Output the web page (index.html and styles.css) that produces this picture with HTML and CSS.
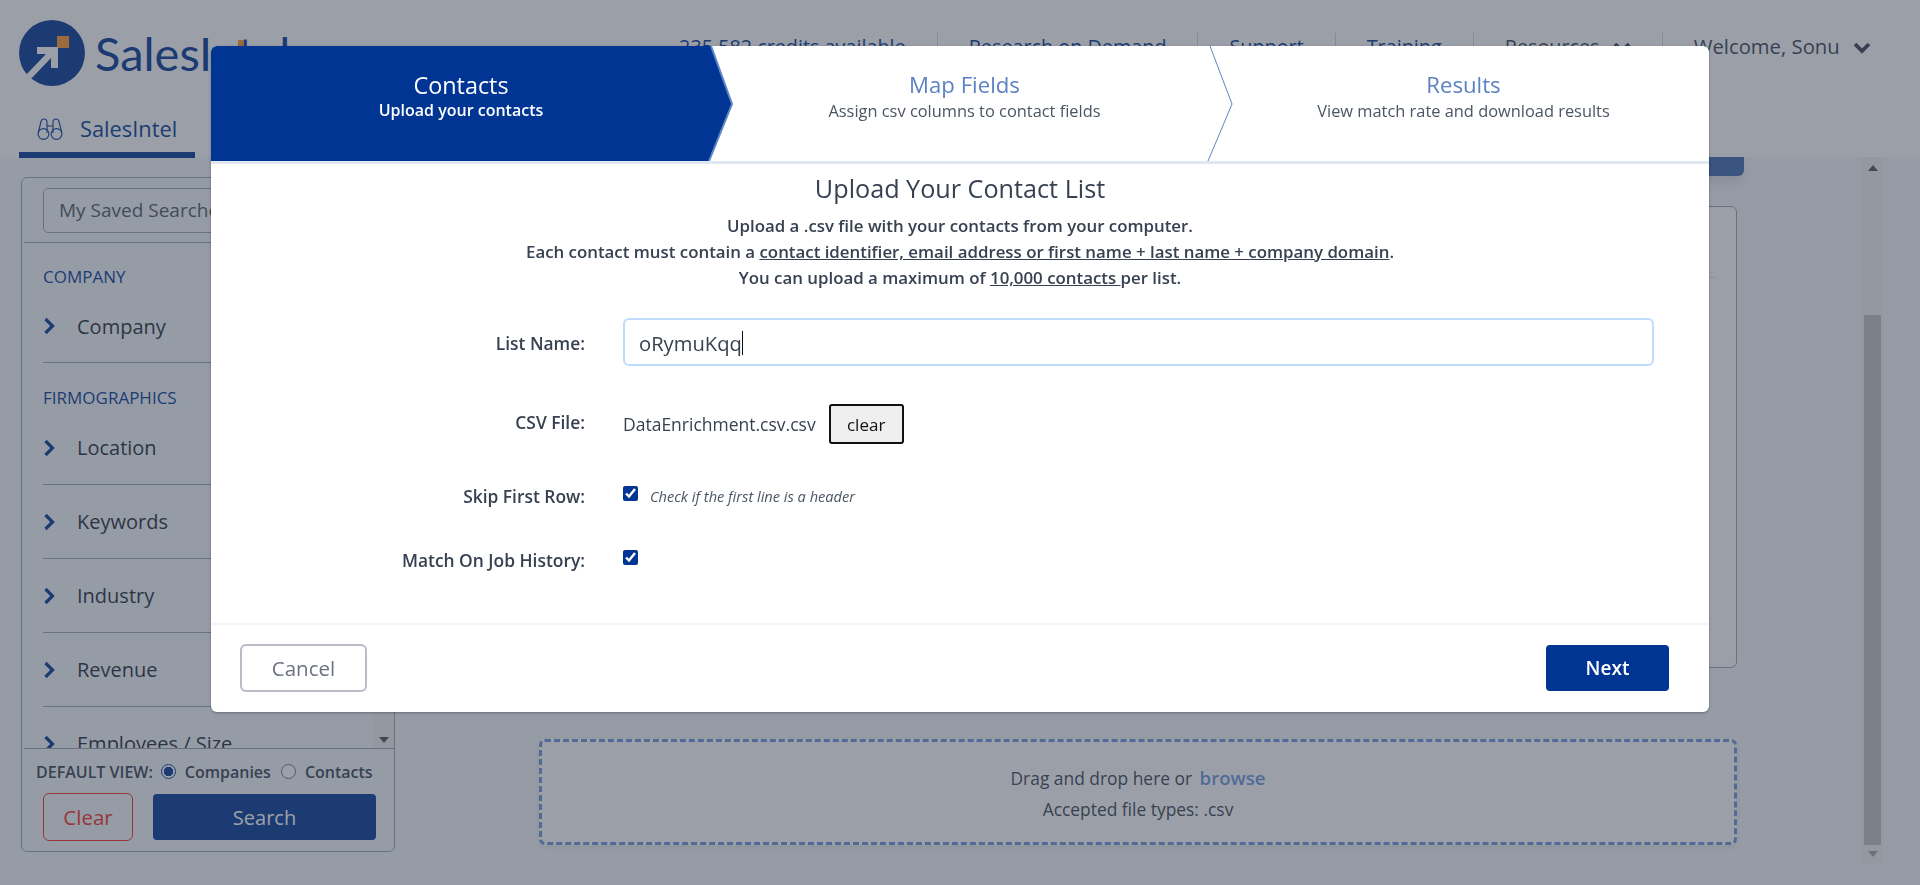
FILE: index.html
```html
<!DOCTYPE html>
<html lang="en">
<head>
<meta charset="utf-8">
<title>SalesIntel - Data Enrichment</title>
<link rel="stylesheet" href="styles.css">
</head>
<body>
<div class="page">
  <header class="app-header">
    <div class="top-row">
      <a class="logo">
        <svg class="logo-mark" viewBox="0 0 66 66" width="66" height="66">
          <circle cx="33" cy="33" r="33" fill="#003594"/>
          <rect x="38" y="16" width="12" height="12" fill="#ff9329"/>
          <polygon points="18,27 39,27 39,48 32,48 32,38 9,62 5,57 27,34 18,34" fill="#fff"/>
        </svg>
        <span class="logo-text">SalesIntel<i class="logo-dot"></i></span>
      </a>
      <nav class="top-nav">
        <a class="nav-item link">235,582 credits available</a>
        <a class="nav-item link">Research on Demand</a>
        <a class="nav-item link">Support</a>
        <a class="nav-item link">Training</a>
        <a class="nav-item muted">Resources
          <svg class="chev" viewBox="0 0 18 12" width="18" height="12"><path d="M2 2l7 7 7-7" fill="none" stroke="currentColor" stroke-width="3.8"/></svg>
        </a>
        <a class="nav-item muted welcome">Welcome, Sonu
          <svg class="chev" viewBox="0 0 18 12" width="18" height="12"><path d="M2 2l7 7 7-7" fill="none" stroke="currentColor" stroke-width="3.8"/></svg>
        </a>
      </nav>
    </div>
    <div class="tab">
      <svg class="binoculars" viewBox="0 0 26 22" width="26" height="22" fill="none" stroke="#003594" stroke-width="1.1">
        <circle cx="6.5" cy="16" r="5.4"/><circle cx="19.5" cy="16" r="5.4"/>
        <path d="M1.2 15L4 3.5Q4.6 1 7 1 9.5 1 10 3.5V15M16 15V3.5Q16.5 1 19 1 21.4 1 22 3.5L24.8 15M10 8h6"/>
      </svg>
      <span>SalesIntel</span>
    </div>
  </header>

  <main class="workspace">
    <aside class="sidebar">
      <div class="filters">
        <div class="saved"><div class="saved-select">My Saved Searches</div></div>
        <h4 class="section-label">Company</h4>
        <div class="filter first"><svg class="arrow" viewBox="0 0 12 18" width="12" height="18"><path d="M2.5 2l7 7-7 7" fill="none" stroke="#003594" stroke-width="3.2"/></svg>Company</div>
        <h4 class="section-label second">Firmographics</h4>
        <div class="filter after-label"><svg class="arrow" viewBox="0 0 12 18" width="12" height="18"><path d="M2.5 2l7 7-7 7" fill="none" stroke="#003594" stroke-width="3.2"/></svg>Location</div>
        <div class="filter"><svg class="arrow" viewBox="0 0 12 18" width="12" height="18"><path d="M2.5 2l7 7-7 7" fill="none" stroke="#003594" stroke-width="3.2"/></svg>Keywords</div>
        <div class="filter"><svg class="arrow" viewBox="0 0 12 18" width="12" height="18"><path d="M2.5 2l7 7-7 7" fill="none" stroke="#003594" stroke-width="3.2"/></svg>Industry</div>
        <div class="filter"><svg class="arrow" viewBox="0 0 12 18" width="12" height="18"><path d="M2.5 2l7 7-7 7" fill="none" stroke="#003594" stroke-width="3.2"/></svg>Revenue</div>
        <div class="filter"><svg class="arrow" viewBox="0 0 12 18" width="12" height="18"><path d="M2.5 2l7 7-7 7" fill="none" stroke="#003594" stroke-width="3.2"/></svg>Employees / Size</div>
        <div class="side-scroll"><span class="tri down"></span></div>
      </div>
      <div class="side-footer">
        <div class="view-row">
          <b>DEFAULT VIEW:</b>
          <span class="radio on"></span><span class="radio-label">Companies</span>
          <span class="radio"></span><span class="radio-label">Contacts</span>
        </div>
        <div class="actions">
          <button class="btn-clear">Clear</button>
          <button class="btn-search">Search</button>
        </div>
      </div>
    </aside>

    <section class="content">
      <div class="top-bar"></div>
      <div class="list-card"><div class="card-line"></div></div>
      <h2 class="content-title">Data Enrichment</h2>
      <div class="dropzone">
        <p>Drag and drop here or <a>browse</a></p>
        <p>Accepted file types: .csv</p>
      </div>
    </section>

    <div class="page-scroll">
      <span class="tri up"></span>
      <div class="thumb"></div>
      <span class="tri down faint"></span>
    </div>
  </main>
</div>

<div class="backdrop"></div>

<div class="modal">
  <div class="steps">
    <svg class="step-shapes" viewBox="0 0 1498 115" width="1498" height="115" preserveAspectRatio="none">
      <polygon points="0,0 500,0 521,58 498,115 0,115" fill="#003594"/>
      <path d="M500 0L521 58 498 115" fill="none" stroke="#5f86c4" stroke-width="2"/>
      <path d="M999 0L1021 58 997 115" fill="none" stroke="#5f86c4" stroke-width="1"/>
    </svg>
    <div class="step active"><strong>Contacts</strong><span>Upload your contacts</span></div>
    <div class="step"><strong>Map Fields</strong><span>Assign csv columns to contact fields</span></div>
    <div class="step"><strong>Results</strong><span>View match rate and download results</span></div>
  </div>
  <div class="modal-body">
    <h3>Upload Your Contact List</h3>
    <p class="intro">Upload a .csv file with your contacts from your computer.<br>
    Each contact must contain a <u>contact identifier, email address or first name + last name + company domain</u>.<br>
    You can upload a maximum of <u>10,000 contacts </u>per list.</p>
    <div class="form">
      <div class="form-row name-row">
        <label>List Name:</label>
        <div class="text-input">oRymuKqq<span class="caret"></span></div>
      </div>
      <div class="form-row file-row">
        <label>CSV File:</label>
        <span class="file-name">DataEnrichment.csv.csv</span>
        <button class="btn-file-clear">clear</button>
      </div>
      <div class="form-row skip-row">
        <label>Skip First Row:</label>
        <input type="checkbox" checked>
        <em>Check if the first line is a header</em>
      </div>
      <div class="form-row match-row">
        <label>Match On Job History:</label>
        <input type="checkbox" checked>
      </div>
    </div>
  </div>
  <div class="modal-footer">
    <button class="btn-cancel">Cancel</button>
    <button class="btn-next">Next</button>
  </div>
</div>
</body>
</html>
```
FILE: styles.css
```css
* { box-sizing: border-box; }
html, body { margin: 0; height: 100%; overflow: hidden; }
body {
  font-family: "Open Sans", "Noto Sans", sans-serif;
  background: #f5f7fb;
  color: #374151;
}
h2, h3, h4, p { margin: 0; font-weight: 400; }
button { font-family: inherit; cursor: pointer; }

.page { width: 1920px; height: 885px; display: flex; flex-direction: column; }

/* header */
.app-header {
  height: 157px;
  flex: none;
  background: #fff;
  padding: 20px 0 0 19px;
  position: relative;
}
.top-row { display: flex; justify-content: space-between; height: 79px; }
.logo { display: flex; align-items: center; height: 66px; color: #003594; }
.logo-mark { flex: none; }
.logo-text {
  font-family: Lato, sans-serif;
  font-size: 47px;
  margin-left: 10px;
  color: #003594;
  position: relative;
  line-height: 66px;
}
.logo-dot {
  position: absolute;
  left: 143px;
  top: 20px;
  width: 6px;
  height: 6px;
  background: #ff9329;
}
.top-nav { display: flex; align-items: flex-start; padding: 13px 49px 0 0; }
.nav-item {
  height: 30px;
  padding: 0 31px;
  font-size: 19.8px;
  line-height: 27px;
  border-left: 1px solid #d1d5db;
  white-space: nowrap;
}
.nav-item:first-child { border-left: 0; }
.nav-item.link { color: #003594; }
.nav-item.muted { color: #374151; }
.welcome { padding-right: 0; font-size: 20.3px; }
.chev { margin-left: 8px; }
.tab {
  width: 176px;
  height: 59px;
  border-bottom: 6px solid #003594;
  display: flex;
  align-items: center;
  gap: 17px;
  padding: 6px 0 0 18px;
  font-size: 21.8px;
  color: #003594;
}

/* body area */
.workspace { flex: 1; display: flex; align-items: flex-start; min-height: 0; }
.sidebar {
  width: 374px;
  height: 675px;
  margin: 20px 0 0 21px;
  border: 1px solid #9ca3af;
  border-radius: 6px;
  display: flex;
  flex-direction: column;
  flex: none;
  background: #f5f7fb;
}
.filters { height: 570px; position: relative; overflow: hidden; flex: none; }
.saved { margin: 0 0 0 2px; padding: 10px 0 9px 19px; border-bottom: 1px solid #9ca3af; height: 65px; }
.saved-select {
  width: 300px;
  height: 45px;
  border: 1px solid #9ca3af;
  border-radius: 5px;
  padding-left: 15px;
  line-height: 43px;
  font-size: 19px;
  color: #4b5563;
  white-space: nowrap;
}
.section-label {
  margin: 24px 0 0 21px;
  line-height: 20px;
  font-size: 17px;
  color: #003594;
  text-transform: uppercase;
}
.section-label.second { margin-top: 25px; }
.filter {
  margin-left: 21px;
  width: 330px;
  height: 74px;
  display: flex;
  align-items: center;
  gap: 22px;
  font-size: 20px;
  color: #1f2937;
  border-bottom: 1px solid #9ca3af;
  white-space: nowrap;
}
.filter.first { height: 73px; margin-top: 3px; }
.filter.after-label { margin-top: 3px; }
.filter:last-of-type { border-bottom: 0; }
.arrow { flex: none; }
.side-scroll {
  position: absolute;
  right: 0;
  top: 0;
  bottom: 0;
  width: 21px;
  background: #f1f1f1;
  display: flex;
  justify-content: center;
  align-items: flex-end;
  padding-bottom: 5px;
}
.tri { width: 0; height: 0; border-left: 5px solid transparent; border-right: 5px solid transparent; display: block; }
.tri.down { border-top: 6px solid #505050; }
.tri.up { border-bottom: 6px solid #505050; }
.tri.down.faint { border-top-color: #a3a3a3; }

.side-footer { flex: 1; border-top: 1px solid #9ca3af; margin-left: 2px; }
.view-row { display: flex; align-items: center; height: 44px; padding: 1px 0 0 12px; font-size: 16px; white-space: nowrap; }
.view-row b { font-weight: 600; margin-right: 8px; }
.radio { width: 15px; height: 15px; border: 1px solid #6b7280; border-radius: 50%; background: #fff; flex: none; margin-right: 9px; }
.radio.on { border-color: #003594; background: radial-gradient(circle, #003594 0 4.5px, #fff 5px); }
.radio-label { margin-right: 10px; font-weight: 600; color: #374151; }
.actions { display: flex; gap: 20px; padding-left: 19px; }
.btn-clear {
  width: 90px;
  height: 48px;
  border: 1px solid #f52a20;
  border-radius: 6px;
  background: transparent;
  color: #f52a20;
  font-size: 20.5px;
}
.btn-search {
  width: 223px;
  height: 46px;
  margin-top: 1px;
  border: 0;
  border-radius: 4px;
  background: #003594;
  color: #fff;
  font-size: 20px;
}

.content { width: 1198px; margin-left: 144px; flex: none; }
.top-bar {
  width: 1205px;
  height: 19px;
  background: #3b66ad;
  border-radius: 0 0 6px 6px;
  box-shadow: 0 6px 14px rgba(0,0,0,.12);
}
.list-card {
  height: 462px;
  margin-top: 30px;
  border: 1px solid #9ca3af;
  border-radius: 6px;
  background: #fff;
  padding: 70px 20px 0;
}
.card-line { border-top: 1px solid #e5e7eb; }
.content-title { font-size: 26px; line-height: 32px; margin-top: 15px; color: #d1d5db; height: 40px; }
.dropzone {
  height: 106px;
  margin-top: 16px;
  border: 3px dashed #6d93db;
  border-radius: 6px;
  text-align: center;
  padding-top: 20px;
  font-size: 17.4px;
  line-height: 31px;
  box-shadow: 0 2px 6px rgba(0,0,0,.08);
  background: #fff;
}
.dropzone a { color: #6d93db; font-weight: 600; margin-left: 3px; font-size: 18.6px; }

.page-scroll {
  width: 21px;
  height: 708px;
  margin-left: 125px;
  flex: none;
  background: #f1f1f1;
  display: flex;
  flex-direction: column;
  align-items: center;
  padding-top: 8px;
}
.thumb { width: 17px; height: 530px; margin-top: 144px; background: #c1c1c1; }
.page-scroll .tri.down { margin-top: 6px; }

/* overlay */
.backdrop { position: fixed; inset: 0; background: rgba(55,65,81,.5); }
.modal {
  position: fixed;
  left: 211px;
  top: 46px;
  width: 1498px;
  height: 666px;
  background: #fff;
  border-radius: 6px;
  overflow: hidden;
  box-shadow: 0 1px 3px rgba(0,0,0,.3);
  display: flex;
  flex-direction: column;
}
.steps {
  flex: none;
  height: 118px;
  display: grid;
  grid-template-columns: 500px 507px 491px;
  border-bottom: 3px solid #dfe7f3;
  position: relative;
}
.step-shapes { position: absolute; left: 0; top: 0; }
.step {
  position: relative;
  display: flex;
  flex-direction: column;
  align-items: center;
  padding-top: 23px;
  color: #4b5563;
}
.step strong { font-weight: 400; font-size: 22.2px; line-height: 32px; color: #5b82c2; }
.step span { font-size: 16.4px; line-height: 19px; }
.step.active strong { font-size: 23.4px; color: #fff; }
.step.active span { font-size: 16px; font-weight: 600; color: #fff; }

.modal-body { flex: 1; text-align: center; }
.modal-body h3 { font-size: 25.2px; line-height: 32px; margin-top: 8px; color: #374151; }
.intro { font-size: 16.85px; line-height: 26px; font-weight: 600; margin-top: 9px; color: #374151; }
.form { text-align: left; margin-top: 27px; }
.form-row { display: flex; align-items: center; }
.form-row label { width: 374px; text-align: right; font-weight: 600; font-size: 17.4px; margin-right: 38px; flex: none; }
.name-row { height: 48px; }
.name-row label { margin-top: 2px; }
.text-input {
  width: 1031px;
  height: 48px;
  border: 2px solid #bfdbfe;
  border-radius: 6px;
  padding: 1px 0 0 14px;
  font-size: 20.2px;
  color: #374151;
  display: flex;
  align-items: center;
}
.caret { display: inline-block; width: 1px; height: 24px; background: #111; }
.file-row { height: 40px; margin-top: 38px; }
.file-row label { margin-top: -4px; }
.file-name { font-size: 17.5px; }
.btn-file-clear {
  width: 75px;
  height: 40px;
  margin-left: 13px;
  background: #efefef;
  border: 2px solid #111;
  border-radius: 3px;
  font-size: 17px;
  color: #111;
}
.skip-row { margin-top: 42px; height: 20px; }
.match-row { margin-top: 44px; height: 20px; }
.form-row input { width: 15px; height: 15px; margin: 0; accent-color: #003594; flex: none; }
.skip-row input, .match-row input { margin-top: -6px; }
.form-row em { font-size: 14.6px; margin-left: 12px; color: #4b5563; }

.modal-footer {
  flex: none;
  height: 89px;
  border-top: 2px solid #f3f4f6;
  display: flex;
  justify-content: space-between;
  align-items: flex-start;
  padding: 19px 40px 0 29px;
}
.btn-cancel {
  width: 127px;
  height: 48px;
  background: #fff;
  border: 2px solid #b9bcc6;
  border-radius: 6px;
  font-size: 20.5px;
  color: #6b7280;
}
.btn-next {
  width: 123px;
  height: 46px;
  margin-top: 1px;
  background: #003594;
  border: 0;
  border-radius: 4px;
  color: #fff;
  font-size: 19px;
  font-weight: 600;
}
```
